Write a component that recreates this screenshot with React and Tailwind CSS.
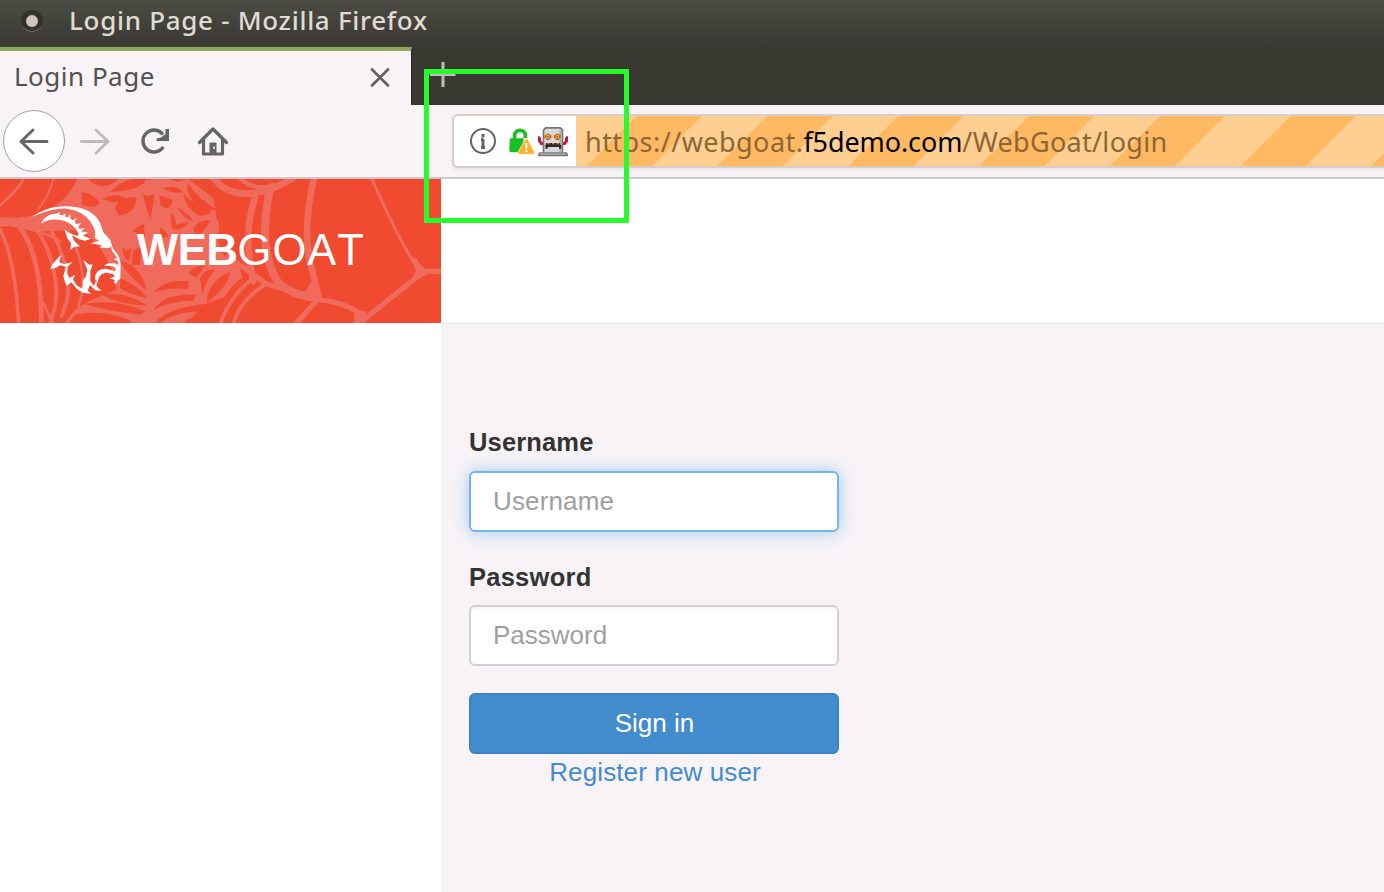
import React from "react";

function WebPattern() {
  return (
    <svg className="absolute inset-0 h-full w-full" viewBox="0 3 1323 432" preserveAspectRatio="none" aria-hidden="true">
      <rect x="0" y="0" width="1323" height="440" fill="#f04a31" />
      {/* hub of the web */}
      <path
        fill="#f06b5c"
        d="M232 0 C215 45 180 85 110 108 C70 122 30 120 0 118 L0 146 C50 140 80 148 105 158 C150 165 200 150 250 160 C300 200 335 250 350 335 C310 350 260 370 225 395 L190 440 L560 440 L610 380 L690 350 L730 312 L720 270 L650 120 L640 60 L560 0Z"
      />
      {/* threads on the left */}
      <g fill="none" stroke="#f06b5c" strokeLinecap="round">
        <path strokeWidth="8" d="M72 0 C55 35 25 60 0 82" />
        <path strokeWidth="11" d="M0 155 C35 220 50 330 56 440" />
        <path strokeWidth="14" d="M60 148 C105 210 125 310 124 440" />
        <path strokeWidth="12" d="M110 155 C150 210 180 310 164 390 L150 440" />
        <path strokeWidth="11" d="M150 150 C190 220 215 310 200 370 L185 415" />
        <path strokeWidth="8" d="M200 150 C245 230 262 310 235 385" />
        <path strokeWidth="6" d="M160 0 C150 50 130 70 115 95" />
        <path strokeWidth="8" d="M40 142 C80 150 130 160 180 190 M130 375 L160 440" />
      </g>
      {/* cells between the threads of the hub */}
      <g fill="#f04a31">
        <path d="M262 0 Q300 50 360 0Z" />
        <path d="M330 42 Q365 5 410 0 L440 0 Q430 38 330 42Z" />
        <path d="M245 42 Q280 45 300 75 Q285 95 245 80Z" />
        <path d="M308 62 Q340 42 380 62 Q350 84 308 62Z" />
        <path d="M345 88 Q370 50 410 60 Q405 110 355 112Z" />
        <path d="M428 48 Q445 60 462 48 Q460 95 450 122 Q438 85 428 48Z" />
        <path d="M478 52 L518 66 Q510 105 482 82Z" />
        <path d="M490 30 Q525 18 550 42 Q520 50 490 30Z" />
        <path d="M425 0 H465 Q445 12 425 0Z M500 0 H560 Q540 22 500 0Z" />
        <path d="M512 105 Q525 110 528 140 L568 132 Q540 165 515 150Z" />
        <path d="M530 88 Q565 105 580 130 Q555 125 530 88Z" />
        <path d="M550 44 Q570 75 635 98 Q625 115 595 112 Q555 90 550 44Z" />
        <path d="M562 14 Q595 62 650 95 Q630 100 590 82 Q558 52 562 14Z" />
        <path d="M595 2 Q630 60 690 90 L700 76 Q650 48 630 0Z" />
        <path d="M582 145 Q610 120 632 130 L600 172 Q575 165 582 145Z" />
        <path d="M480 150 Q500 155 505 178 L478 178Z M398 160 Q420 138 432 140 L435 178Z" />
        <path d="M366 205 Q382 230 394 205 L388 248 Q372 248 366 205Z M398 218 L424 205 L420 260 L396 262Z" />
        <path d="M565 285 Q580 265 615 262 L590 300Z" />
        <path d="M360 250 Q415 255 440 335 Q390 302 360 250Z" />
        <path d="M360 300 Q425 330 440 360 Q390 350 360 330Z" />
        <path d="M300 348 Q380 340 440 382 Q360 382 300 348Z" />
        <path d="M250 378 Q350 360 435 400 L420 410 Q330 400 250 378Z" />
        <path d="M225 410 Q320 392 395 430 L390 440 H205Z" />
        <path d="M462 344 Q490 302 568 310 L563 333 Q505 328 462 344Z" />
        <path d="M460 397 Q490 345 590 350 L580 368 Q500 370 460 397Z" />
        <path d="M468 432 Q505 388 618 378 L610 400 Q520 400 480 438Z" />
        <path d="M540 440 Q590 400 650 408 L640 440Z" />
        <path d="M600 300 Q615 270 645 275 Q610 320 608 350Z" />
        <path d="M620 375 Q620 315 690 280 Q690 310 650 350Z" />
        <path d="M655 418 Q660 350 724 300 L730 320 Q695 360 680 425Z" />
        <path d="M655 190 Q650 130 678 105 Q700 115 688 185 L675 240Z" />
        <path d="M710 200 Q708 120 750 75 L750 230 L715 225Z" />
      </g>
      {/* open cells on the right */}
      <path fill="#f04a31" d="M650 0 Q700 60 760 75 L790 45 L800 0Z M830 30 L1323 0 V440 H770 L840 340 Q790 290 820 60Z" />
      <g fill="none" stroke="#f06b5c" strokeLinecap="round" strokeLinejoin="round">
        <path strokeWidth="20" d="M640 0 C690 65 780 60 880 0" />
        <path strokeWidth="13" d="M720 0 C750 30 790 35 820 20" />
        <path strokeWidth="20" d="M765 60 C740 130 740 220 760 310" />
        <path strokeWidth="24" d="M808 40 C790 140 785 230 832 310 C860 345 910 355 950 360" />
        <path strokeWidth="20" d="M942 0 C920 90 915 190 930 250 L955 355" />
        <path strokeWidth="15" d="M690 240 L800 318 L955 365 Q1030 370 1090 412" />
        <path strokeWidth="16" d="M955 362 L885 440" />
        <path strokeWidth="9" d="M1114 0 C1160 100 1190 170 1245 260" />
        <path strokeWidth="16" d="M1245 250 Q1252 280 1275 280 H1323 M1272 280 C1220 325 1150 375 1075 440" />
        <path strokeWidth="12" d="M795 320 C750 350 710 390 700 440 M765 295 C720 330 680 380 660 440" />
      </g>
      <path fill="#f06b5c" d="M1230 230 L1250 270 L1230 315 L1290 285Z M935 310 L955 380 L910 350Z M1065 400 L1100 400 L1100 425 L1060 440Z" />
    </svg>
  );
}

function GoatLogo() {
  return (
    <svg className="absolute inset-0 h-full w-full" viewBox="0 3 1323 432" preserveAspectRatio="none" fill="#fff" aria-hidden="true">
      {/* outer edge of the horn */}
      <path d="M95 118 C130 92 175 80 225 87 C262 91 290 112 300 134 C307 150 306 160 318 172 C330 184 334 194 333 204 L318 205 L300 190 L284 180 C290 165 282 148 272 132 C255 108 232 96 200 92 C165 90 125 104 95 118Z" />
      {/* ridged inner edge */}
      <path d="M123 137 C132 116 150 107 168 107 L180 102 L178 110 L188 112 L196 106 L196 116 L204 118 L211 108 L211 122 L218 127 L229 119 L224 132 L230 139 L243 134 L235 147 L239 153 L254 150 L244 160 L264 164 L249 173 L273 182 L254 188 L235 183 L216 171 L222 188 L240 205 L222 207 L211 216 L213 196 L202 181 L193 153 C204 166 220 170 236 174 C234 157 222 143 205 134 C180 122 146 120 123 137Z" />
      {/* eye and muzzle */}
      <path d="M272 196 L298 188 L318 196 L334 203 L328 210 L300 209 L306 202Z" />
      <path d="M328 180 C336 194 334 205 342 216 C352 226 360 239 362 257 L361 303 L353 307 L350 317 L342 316 L344 306 L328 301 L344 296 L340 288 L318 284 C300 286 293 301 294 316 L286 306 C282 286 296 271 318 272 L346 280 L347 270 L336 264 L312 264 L324 256 L346 256 L353 262 L355 250 L341 243 L352 240 L336 218Z" />
      {/* beard */}
      <path d="M151 273 C156 255 171 246 184 229 L178 253 L192 258 L217 253 L203 266 L201 286 L208 300 L226 290 L219 304 L230 322 L247 332 L249 307 L258 295 L262 276 L250 246 C262 255 268 264 278 259 L271 280 L271 308 L282 324 L289 306 L290 325 L304 339 L286 337 L270 322 L263 338 L274 347 L248 344 L231 333 L214 313 L200 323 L195 313 L190 294 L199 266 L181 262 L168 269Z" />
    </svg>
  );
}

function Robot() {
  return (
    <svg className="h-[30px] w-[30px] shrink-0" viewBox="0 0 90 90" aria-hidden="true">
      <path fill="#c8143c" d="M0 28h5l4 6v8l6 4v8H7l-4-8H0zM90 28h-5l-4 6v8l-6 4v8h8l4-8h3z" />
      <path fill="#77777b" d="M22 0h46l8 8v68h10l4 6v6H0v-6l4-6h10V8z" />
      <path fill="#d8d8d9" d="M24 5h42l5 6v65H19V11z" />
      <path fill="#adadb0" d="M64 8l7 5v63h-7zM6 79h78v4H6z" />
      <path fill="#b96427" d="M25 20h10v4h5v10h-5v5H25v-5h-5V24h5zM53 20h10v4h5v10h-5v5H53v-5h-5V24h5z" />
      <path fill="#ffb11a" d="M25 24h10v10H25zM53 24h10v10H53z" />
      <path fill="#b4471a" d="M28 27h4v4h-4zM56 27h4v4h-4z" />
      <path fill="#2f2b2d" d="M24 48h42v5h4v12h-7v-5H29v5h-7V53h2z" />
      <path fill="#f36c25" d="M28 48h7v4h-7zM42 48h7v4h-7zM56 48h7v4h-7z" />
    </svg>
  );
}

function Lock() {
  return (
    <svg className="h-[30px] w-[27px] shrink-0" viewBox="0 0 81 90" aria-hidden="true">
      <path fill="none" stroke="#17bf22" strokeWidth="11" d="M20 38V25c0-20 32-20 32 0v8" />
      <path fill="#17bf22" d="M5 38q0-4 4-4h38v42H9q-5 0-5-6z" />
      <path fill="#ffb02c" stroke="#fff" strokeWidth="2" d="M51 38q4-6 8 0l20 36q3 7-4 8H35q-7-1-4-8z" />
      <path stroke="#fff" strokeWidth="6" d="M55 48v17M55 69v6" />
    </svg>
  );
}

const STRIPES = [-4.8, 126, 256.8, 387.600, 518.400, 649.200, 780];

function Stripes() {
  return (
    <svg className="absolute inset-0 h-full w-full" aria-hidden="true">
      <rect width="100%" height="100%" fill="#ffb963" />
      {STRIPES.map((x) => (
        <path key={x} fill="#ffcf92" d={`M${x} 0h65.400l-51 51h-65.400z`} />
      ))}
    </svg>
  );
}

function Toolbar() {
  return (
    <div className="flex h-[74px] shrink-0 items-center border-b-2 border-[#cbc7ca] bg-[#f7f3f7] pl-[3px]">
      <div className="flex h-[62px] w-[62px] shrink-0 items-center justify-center rounded-full border border-[#a3a1a3] bg-white">
        <svg className="h-[30px] w-[32px]" viewBox="0 0 32 30" fill="none" stroke="#636663" strokeWidth="3" strokeLinecap="round" strokeLinejoin="round">
          <path d="M29 15.500H3M15 4L3 15.500l12 11.500" />
        </svg>
      </div>
      <svg className="ml-[14px] h-[30px] w-[32px] shrink-0" viewBox="0 0 32 30" fill="none" stroke="#bebbbe" strokeWidth="3" strokeLinecap="round" strokeLinejoin="round">
        <path d="M2.500 15.500H29M17 4L29 15.500 17 27" />
      </svg>
      <svg className="ml-[28px] h-[30px] w-[32px] shrink-0" viewBox="0 0 32 30" fill="none">
        <path d="M23.500 22A11 11 0 1 1 23 7.500" stroke="#636663" strokeWidth="3.400" strokeLinecap="round" />
        <path d="M30 3v12H17.500v-2.500l4.500-1 4.500-3.500V3z" fill="#636663" />
      </svg>
      <svg className="ml-[26px] h-[32px] w-[32px] shrink-0" viewBox="0 0 32 32">
        <path d="M2.500 17.500L16 4 29.500 17.500M6.500 14.500v14.500h19V14.500" fill="none" stroke="#636663" strokeWidth="3.200" strokeLinecap="round" strokeLinejoin="round" />
        <path d="M12.500 28V18.500q0-1 1-1h5q1 0 1 1V28z" fill="#636663" />
        <path d="M16 21.500h2v2.500h-2z" fill="#d4d0d4" />
      </svg>
      <div className="ml-[223px] flex h-[54px] flex-1 overflow-hidden rounded-l-[6px] border-2 border-r-0 border-[#d8cdc8] bg-white shadow-[0_2px_3px_#e8e4e3]">
        <div className="flex w-[122px] shrink-0 items-center pl-[15px]">
          <svg className="h-[28px] w-[28px] shrink-0" viewBox="0 0 28 28">
            <circle cx="14" cy="14" r="12" fill="none" stroke="#646464" strokeWidth="2" />
            <path d="M14 7v3.500M14 12v8.500M12 12.600H14M12 20.500h4" stroke="#646464" strokeWidth="3" />
          </svg>
          <div className="mt-[2px] ml-[11px] flex items-center gap-[3px]">
            <Lock />
            <Robot />
          </div>
        </div>
        <div className="relative flex-1">
          <Stripes />
          <div className="relative flex h-full items-center pt-[1px] pl-[9px] font-['Noto_Sans',sans-serif] text-[27px] leading-none whitespace-nowrap text-[#8e6636]">
            <span className="tracking-[0.45px]">https://webgoat.</span>
            <span className="tracking-[-0.1px] text-black">f5demo.com</span>
            <span className="tracking-[0.3px]">/WebGoat/login</span>
          </div>
        </div>
      </div>
    </div>
  );
}

export default function App() {
  return (
    <div className="relative flex h-[892px] w-[1384px] flex-col overflow-hidden bg-white font-['Liberation_Sans',sans-serif]">
      <div className="flex h-[47px] shrink-0 items-center bg-linear-to-b from-[#4c4b44] to-[#393832] pb-[5px] pl-[21px]">
        <div className="mr-[26px] flex h-[22px] w-[22px] items-center justify-center rounded-full border-b border-[#6b6962] bg-[#33322d]">
          <div className="h-[12px] w-[12px] rounded-full bg-[#cfc5bc]" />
        </div>
        <span className="pb-[2px] font-['Noto_Sans',sans-serif] text-[26px] leading-none font-medium tracking-[0.7px] whitespace-nowrap text-[#dfdbd2]">Login Page - Mozilla Firefox</span>
      </div>
      <div className="flex h-[58px] shrink-0 bg-[#3a3931]">
        <div className="flex w-[412px] items-center justify-between border-t-[4px] border-r border-t-[#8fa95a] border-r-[#292822] bg-[#f7f3f7] pr-[21px] pb-[3px] pl-[14px]">
          <span className="pb-[2px] font-['Noto_Sans',sans-serif] text-[26px] leading-none tracking-[0.5px] whitespace-nowrap text-[#53514f]">Login Page</span>
          <svg className="h-[20px] w-[20px]" viewBox="0 0 20 20" stroke="#62615f" strokeWidth="2.600" strokeLinecap="round">
            <path d="M2 2.500l16 16M18 2.500l-16 16" />
          </svg>
        </div>
        <svg className="mt-[14px] ml-[18px] h-[27px] w-[27px]" viewBox="0 0 27 27" stroke="#c1beb9" strokeWidth="3">
          <path d="M13 1v25M0 13.500h25.500" />
        </svg>
      </div>
      <Toolbar />
      <div className="flex h-[144px] shrink-0">
        <div className="relative w-[441px] shrink-0">
          <WebPattern />
          <GoatLogo />
          <div className="relative flex h-full items-center pl-[137px] text-[43.500px] leading-none text-white">
            <span className="font-bold tracking-[-0.3px]">WEB</span>
            <span className="tracking-[1px] [font-kerning:none]">GOAT</span>
          </div>
        </div>
        <div className="flex-1 bg-white" />
      </div>
      <div className="flex flex-1">
        <div className="w-[441px] shrink-0 bg-white" />
        <div className="flex-1 border-t border-[#e7e4e8] bg-[#f7f3f7] pt-[102px] pl-[28px]">
          <form className="flex w-[370px] flex-col text-[26px]">
            <label className="flex h-[34px] items-center text-[25.500px] leading-none font-bold tracking-[0.15px] text-[#333]">Username</label>
            <div className="mt-[11px] flex h-[61px] items-center rounded-[6px] border-2 border-[#74b5ee] bg-white pb-px pl-[22px] tracking-[0.15px] text-[#a19e9f] shadow-[0_0_16px_rgba(102,175,233,0.6)]">Username</div>
            <label className="mt-[29px] flex h-[34px] items-center text-[25.500px] leading-none font-bold tracking-[0.25px] text-[#333]">Password</label>
            <div className="mt-[10px] flex h-[61px] items-center rounded-[6px] border-2 border-[#d3d0d2] bg-white pb-px pl-[22px] text-[#a19e9f] shadow-[inset_0_2px_2px_rgba(0,0,0,0.04)]">Password</div>
            <button type="button" className="mt-[27px] flex h-[61px] items-center justify-center rounded-[6px] border-2 border-[#3b82c2] bg-[#428bcd] pb-px pl-px text-white">Sign in</button>
            <a className="pl-[2px] text-center leading-[36px] tracking-[0.12px] text-[#428bd5]">Register new user</a>
          </form>
        </div>
      </div>
      <div className="absolute top-[69px] left-[424px] h-[154px] w-[205px] border-[5px] border-[#27fb2d]" />
    </div>
  );
}
